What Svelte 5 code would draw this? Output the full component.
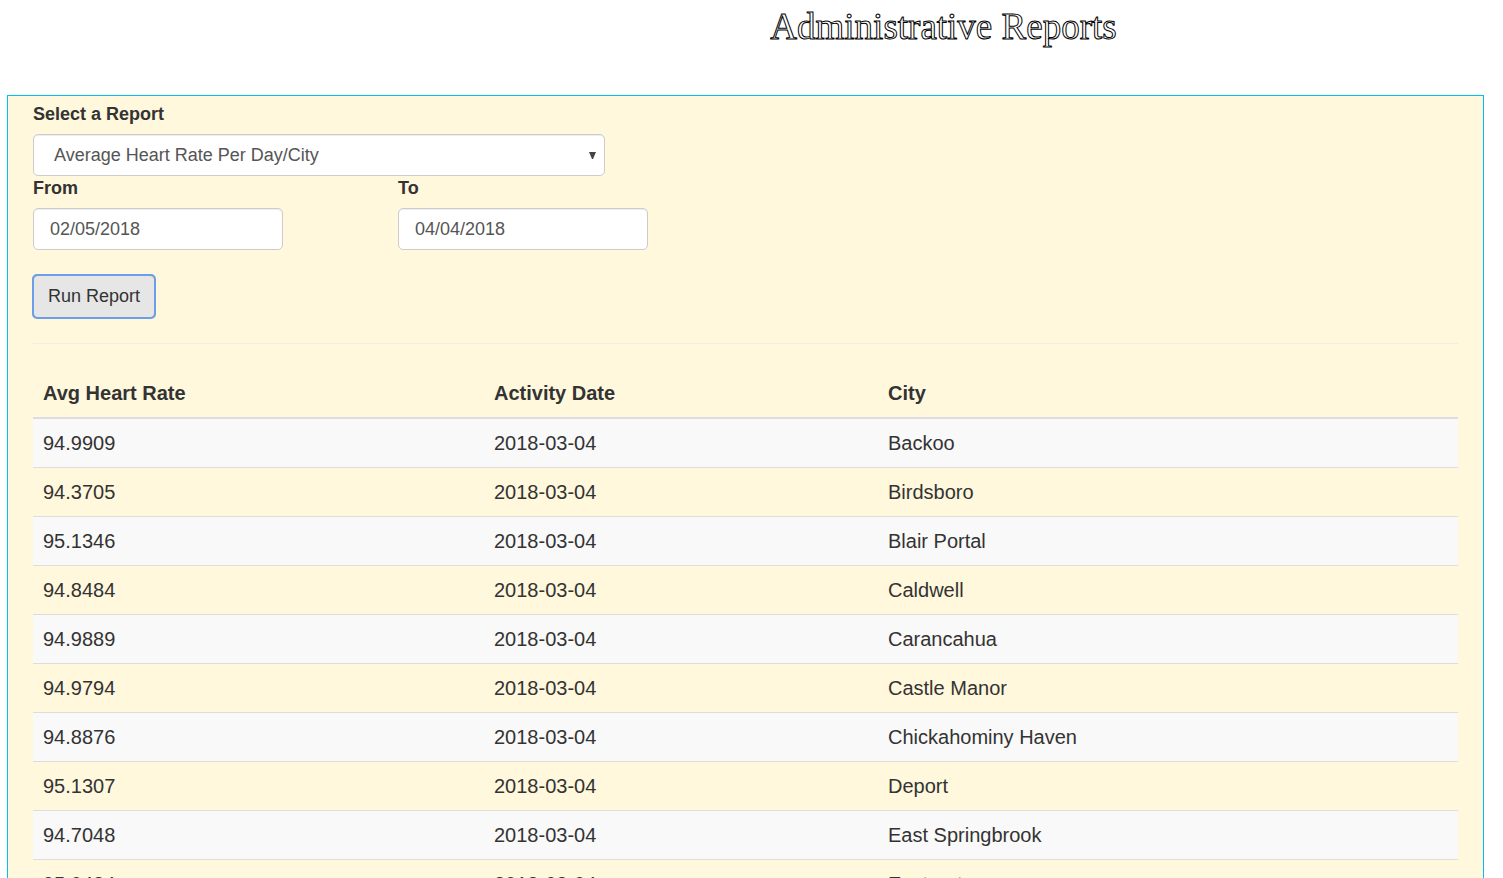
<script>
  const reports = ['Average Heart Rate Per Day/City'];
  let selected = $state(reports[0]);
  let from = $state('02/05/2018');
  let to = $state('04/04/2018');

  const rows = [
    ['94.9909', '2018-03-04', 'Backoo'],
    ['94.3705', '2018-03-04', 'Birdsboro'],
    ['95.1346', '2018-03-04', 'Blair Portal'],
    ['94.8484', '2018-03-04', 'Caldwell'],
    ['94.9889', '2018-03-04', 'Carancahua'],
    ['94.9794', '2018-03-04', 'Castle Manor'],
    ['94.8876', '2018-03-04', 'Chickahominy Haven'],
    ['95.1307', '2018-03-04', 'Deport'],
    ['94.7048', '2018-03-04', 'East Springbrook'],
    ['95.0484', '2018-03-04', 'Eastport'],
  ];
</script>

<div class="page">
  <h1>Administrative Reports</h1>
  <main class="panel">
    <form onsubmit={(e) => e.preventDefault()}>
      <label for="report">Select a Report</label>
      <div class="select-wrap">
        <select id="report" class="control" bind:value={selected}>
          {#each reports as report}
            <option>{report}</option>
          {/each}
        </select>
        <svg class="arrow" viewBox="0 0 7 7" aria-hidden="true"><path d="M0 0H7L4 7H3Z" fill="#444" /></svg>
      </div>
      <div class="dates">
        <div class="field">
          <label for="from">From</label>
          <input id="from" class="control" type="text" bind:value={from} />
        </div>
        <div class="field">
          <label for="to">To</label>
          <input id="to" class="control" type="text" bind:value={to} />
        </div>
      </div>
      <button type="submit">Run Report</button>
    </form>
    <hr />
    <table>
      <thead>
        <tr><th class="rate">Avg Heart Rate</th><th class="date">Activity Date</th><th>City</th></tr>
      </thead>
      <tbody>
        {#each rows as row}
          <tr>
            {#each row as cell}<td>{cell}</td>{/each}
          </tr>
        {/each}
      </tbody>
    </table>
  </main>
</div>

<style>
  :global(html) {
    scrollbar-width: none;
  }
  :global(body) {
    margin: 0;
    background: #fff;
  }
  .page,
  .page * {
    box-sizing: border-box;
  }
  .page {
    height: 100vh;
    overflow: hidden;
    color: #333;
    font-family: "Liberation Sans", Arial, sans-serif;
    font-size: 18px;
    line-height: 24px;
  }
  h1 {
    margin: 0 0 42px;
    padding: 0 10px 0 394px;
    color: #fff;
    font: 400 37px/53px "Liberation Serif", "Times New Roman", serif;
    text-align: center;
    -webkit-text-stroke: 1px #000;
  }
  .panel {
    margin: 0 19px 0 7px;
    padding: 6px 25px 24px;
    border: 1px solid #00bfff;
    background: #fff8dc;
  }
  label {
    display: block;
    width: fit-content;
    margin-bottom: 8px;
    font-weight: 700;
  }
  .control {
    display: block;
    width: 100%;
    height: 42px;
    margin: 0;
    padding: 0 16px;
    border: 1px solid #ccc;
    border-radius: 5px;
    background: #fff;
    box-shadow: inset 0 1px 1px rgba(0, 0, 0, 0.075);
    color: #555;
    font: inherit;
  }
  select.control {
    appearance: none;
    padding: 0 20px;
  }
  .select-wrap {
    position: relative;
    width: 100%;
    max-width: 572px;
  }
  .arrow {
    position: absolute;
    top: 18px;
    right: 9px;
    width: 7px;
    height: 7px;
    pointer-events: none;
  }
  .dates {
    display: flex;
    gap: 115px;
  }
  .field {
    width: 250px;
  }
  button {
    display: block;
    height: 43px;
    margin-top: 25px;
    padding: 0 14px 2px;
    border: 1px solid #8c8c8c;
    border-radius: 4px;
    outline: 2px solid #6c9fe8;
    outline-offset: -1px;
    background: #e6e6e6;
    color: #333;
    font: inherit;
  }
  hr {
    height: 1px;
    margin: 25px 0;
    border: 0;
    background: #eee;
  }
  table {
    width: 100%;
    border-collapse: collapse;
    font-size: 20px;
    line-height: 28px;
  }
  th,
  td {
    padding: 10px;
    text-align: left;
  }
  th {
    border-bottom: 2px solid #ddd;
  }
  .rate {
    width: 451px;
  }
  .date {
    width: 394px;
  }
  td {
    border-bottom: 1px solid #ddd;
  }
  tbody tr:nth-child(odd) {
    background: #f9f9f9;
  }
</style>
